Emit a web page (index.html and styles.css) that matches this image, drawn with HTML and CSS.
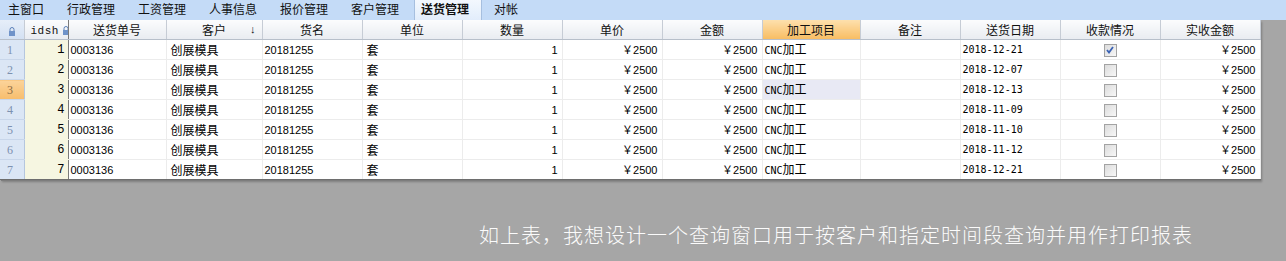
FILE: index.html
```html
<!DOCTYPE html>
<html lang="zh-CN">
<head>
<meta charset="utf-8">
<link rel="stylesheet" href="styles.css">
</head>
<body>
<div class="tabs">
  <span class="tab">主窗口</span>
  <span class="tab">行政管理</span>
  <span class="tab">工资管理</span>
  <span class="tab">人事信息</span>
  <span class="tab">报价管理</span>
  <span class="tab">客户管理</span>
  <span class="tab active">送货管理</span>
  <span class="tab">对帐</span>
</div>
<div class="gridwrap">
<table class="grid">
  <colgroup>
    <col style="width:24px"><col style="width:44px"><col style="width:98px"><col style="width:96px">
    <col style="width:100px"><col style="width:100px"><col style="width:100px"><col style="width:100px">
    <col style="width:100px"><col style="width:98px"><col style="width:100px"><col style="width:100px">
    <col style="width:100px"><col style="width:100px">
  </colgroup>
  <thead>
    <tr>
      <th class="ind"><svg class="lock" width="8" height="9" viewBox="0 0 8 9"><path d="M2 4V2.5a2 2 0 0 1 4 0V4" fill="none" stroke="#5a7fb8" stroke-width="1"/><rect x="1" y="4" width="6" height="5" fill="#6f93c9"/></svg></th>
      <th class="idh"><span class="idsh">idsh</span><svg class="lock" width="8" height="9" viewBox="0 0 8 9"><path d="M2 4V2.5a2 2 0 0 1 4 0V4" fill="none" stroke="#5a7fb8" stroke-width="1"/><rect x="1" y="4" width="6" height="5" fill="#6f93c9"/></svg></th>
      <th>送货单号</th>
      <th class="sort">客户<span class="arrow">↓</span></th>
      <th>货名</th>
      <th>单位</th>
      <th>数量</th>
      <th>单价</th>
      <th>金额</th>
      <th class="hl">加工项目</th>
      <th>备注</th>
      <th>送货日期</th>
      <th>收款情况</th>
      <th>实收金额</th>
    </tr>
  </thead>
  <tbody>
    <tr><td class="ind">1</td><td class="id">1</td><td class="l">0003136</td><td class="l cn">创展模具</td><td class="l">20181255</td><td class="l cn">套</td><td class="r">1</td><td class="r">￥2500</td><td class="r">￥2500</td><td class="l mono">CNC<span class="cn">加工</span></td><td></td><td class="l mono">2018-12-21</td><td class="c"><span class="cb on"><svg width="10" height="10" viewBox="0 0 10 10"><path d="M2 5l2 2.5L8 2" fill="none" stroke="#3a62b4" stroke-width="1.8"/></svg></span></td><td class="r">￥2500</td></tr>
    <tr><td class="ind">2</td><td class="id">2</td><td class="l">0003136</td><td class="l cn">创展模具</td><td class="l">20181255</td><td class="l cn">套</td><td class="r">1</td><td class="r">￥2500</td><td class="r">￥2500</td><td class="l mono">CNC<span class="cn">加工</span></td><td></td><td class="l mono">2018-12-07</td><td class="c"><span class="cb"></span></td><td class="r">￥2500</td></tr>
    <tr><td class="ind cur">3</td><td class="id">3</td><td class="l">0003136</td><td class="l cn">创展模具</td><td class="l">20181255</td><td class="l cn">套</td><td class="r">1</td><td class="r">￥2500</td><td class="r">￥2500</td><td class="l mono sel">CNC<span class="cn">加工</span></td><td></td><td class="l mono">2018-12-13</td><td class="c"><span class="cb"></span></td><td class="r">￥2500</td></tr>
    <tr><td class="ind">4</td><td class="id">4</td><td class="l">0003136</td><td class="l cn">创展模具</td><td class="l">20181255</td><td class="l cn">套</td><td class="r">1</td><td class="r">￥2500</td><td class="r">￥2500</td><td class="l mono">CNC<span class="cn">加工</span></td><td></td><td class="l mono">2018-11-09</td><td class="c"><span class="cb"></span></td><td class="r">￥2500</td></tr>
    <tr><td class="ind">5</td><td class="id">5</td><td class="l">0003136</td><td class="l cn">创展模具</td><td class="l">20181255</td><td class="l cn">套</td><td class="r">1</td><td class="r">￥2500</td><td class="r">￥2500</td><td class="l mono">CNC<span class="cn">加工</span></td><td></td><td class="l mono">2018-11-10</td><td class="c"><span class="cb"></span></td><td class="r">￥2500</td></tr>
    <tr><td class="ind">6</td><td class="id">6</td><td class="l">0003136</td><td class="l cn">创展模具</td><td class="l">20181255</td><td class="l cn">套</td><td class="r">1</td><td class="r">￥2500</td><td class="r">￥2500</td><td class="l mono">CNC<span class="cn">加工</span></td><td></td><td class="l mono">2018-11-12</td><td class="c"><span class="cb"></span></td><td class="r">￥2500</td></tr>
    <tr><td class="ind">7</td><td class="id">7</td><td class="l">0003136</td><td class="l cn">创展模具</td><td class="l">20181255</td><td class="l cn">套</td><td class="r">1</td><td class="r">￥2500</td><td class="r">￥2500</td><td class="l mono">CNC<span class="cn">加工</span></td><td></td><td class="l mono">2018-12-21</td><td class="c"><span class="cb"></span></td><td class="r">￥2500</td></tr>
  </tbody>
</table>
</div>
<p class="note">如上表，我想设计一个查询窗口用于按客户和指定时间段查询并用作打印报表</p>
</body>
</html>
```
FILE: styles.css
```css
html, body {
  margin: 0;
  padding: 0;
}
body {
  background: #a6a6a6;
  font-family: "Liberation Sans", "Noto Sans CJK SC", sans-serif;
  font-size: 12px;
  color: #000;
  width: 1286px;
  height: 261px;
  overflow: hidden;
}
.tabs {
  height: 20px;
  background: #c4dbf7;
  display: flex;
  align-items: stretch;
}
.tab {
  font-family: "Noto Sans CJK SC", sans-serif;
  font-size: 12px;
  line-height: 18px;
  padding: 0 11px 0 8px;
  margin-right: 4px;
  color: #111;
}
.tab.active {
  background: linear-gradient(#f3f8fe, #e2edfb);
  border-left: 1px solid #a6bfdf;
  border-right: 1px solid #a6bfdf;
  font-weight: bold;
  padding: 0 12px 0 6px;
}
.gridwrap {
  width: 1260px;
  box-shadow: 1px 1px 0 #7d7d7d, 2px 2px 2px rgba(0,0,0,0.25);
  background: #fff;
}
.grid {
  table-layout: fixed;
  border-collapse: collapse;
  width: 1260px;
}
.grid th {
  height: 19px;
  padding: 0;
  font-family: "Noto Sans CJK SC", sans-serif;
  font-weight: normal;
  font-size: 12px;
  line-height: 14px;
  vertical-align: middle;
  background: linear-gradient(#fbfcfd, #e9ecf1);
  border-right: 1px solid #c6ccd5;
  border-bottom: 1px solid #b7bfca;
  text-align: center;
  color: #111;
  white-space: nowrap;
  overflow: hidden;
}
.grid th.hl {
  background: linear-gradient(#fde0ad, #f8bd63);
}
.grid th.ind {
  background: linear-gradient(#e6eef9, #d4e1f3);
}
.grid th.idh {
  text-align: left;
  padding-left: 6px;
  border-right: 1px solid #7b7b7b;
}
.idsh {
  font-family: "Liberation Mono", monospace;
  font-size: 11px;
  letter-spacing: 0.5px;
  margin-right: 3px;
}
.lock {
  vertical-align: -1px;
}
.grid th.sort {
  position: relative;
}
.arrow {
  position: absolute;
  right: 6px;
  top: 2px;
  font-family: "Liberation Sans", sans-serif;
  font-size: 11px;
}
.grid td {
  height: 19px;
  padding: 0;
  border-right: 1px solid #ececec;
  border-bottom: 1px solid #ececec;
  white-space: nowrap;
  overflow: hidden;
  font-size: 11px;
  line-height: 14px;
  vertical-align: middle;
}
.grid tbody tr:last-child td {
  border-bottom: 1px solid #6e6e6e;
}
.grid td.ind {
  background: #dbe6f5;
  color: #7d91b0;
  font-family: "Liberation Serif", serif;
  font-size: 12px;
  padding-left: 7px;
  border-right: 1px solid #b5c6de;
  border-bottom: 1px solid #c8d6ea;
}
.grid td.ind.cur {
  background: linear-gradient(#fbd39a, #f7bd6c);
  color: #8a6a44;
}
.grid td.id {
  background: #f6f6e1;
  text-align: right;
  padding-right: 3px;
  font-family: "Liberation Mono", monospace;
  font-size: 12px;
  border-right: 1px solid #7b7b7b;
  border-bottom: 1px solid #f6f6e1;
}
.grid td.l {
  padding-left: 2px;
}
.grid td.cn,
.cn {
  font-family: "Noto Sans CJK SC", sans-serif;
  font-size: 12px;
}
.grid td.cn {
  padding-left: 4px;
}
.grid td.r {
  text-align: right;
  padding-right: 4px;
}
.grid td.c {
  text-align: center;
}
.grid td.mono {
  font-family: "DejaVu Sans Mono", monospace;
  font-size: 10px;
}
.grid td.sel {
  background: #e8e9f4;
}
.cb {
  display: inline-block;
  width: 11px;
  height: 11px;
  border: 1px solid #a3a3a3;
  background: linear-gradient(135deg, #dcdcdc, #f7f7f7);
  vertical-align: middle;
  position: relative;
}
.cb svg {
  position: absolute;
  left: 0;
  top: 0;
}
.note {
  margin: 42px 0 0 479px;
  font-family: "Noto Sans CJK SC", sans-serif;
  font-size: 20px;
  font-weight: 300;
  color: #fbfbfb;
  letter-spacing: 1px;
  line-height: 26px;
}
```
